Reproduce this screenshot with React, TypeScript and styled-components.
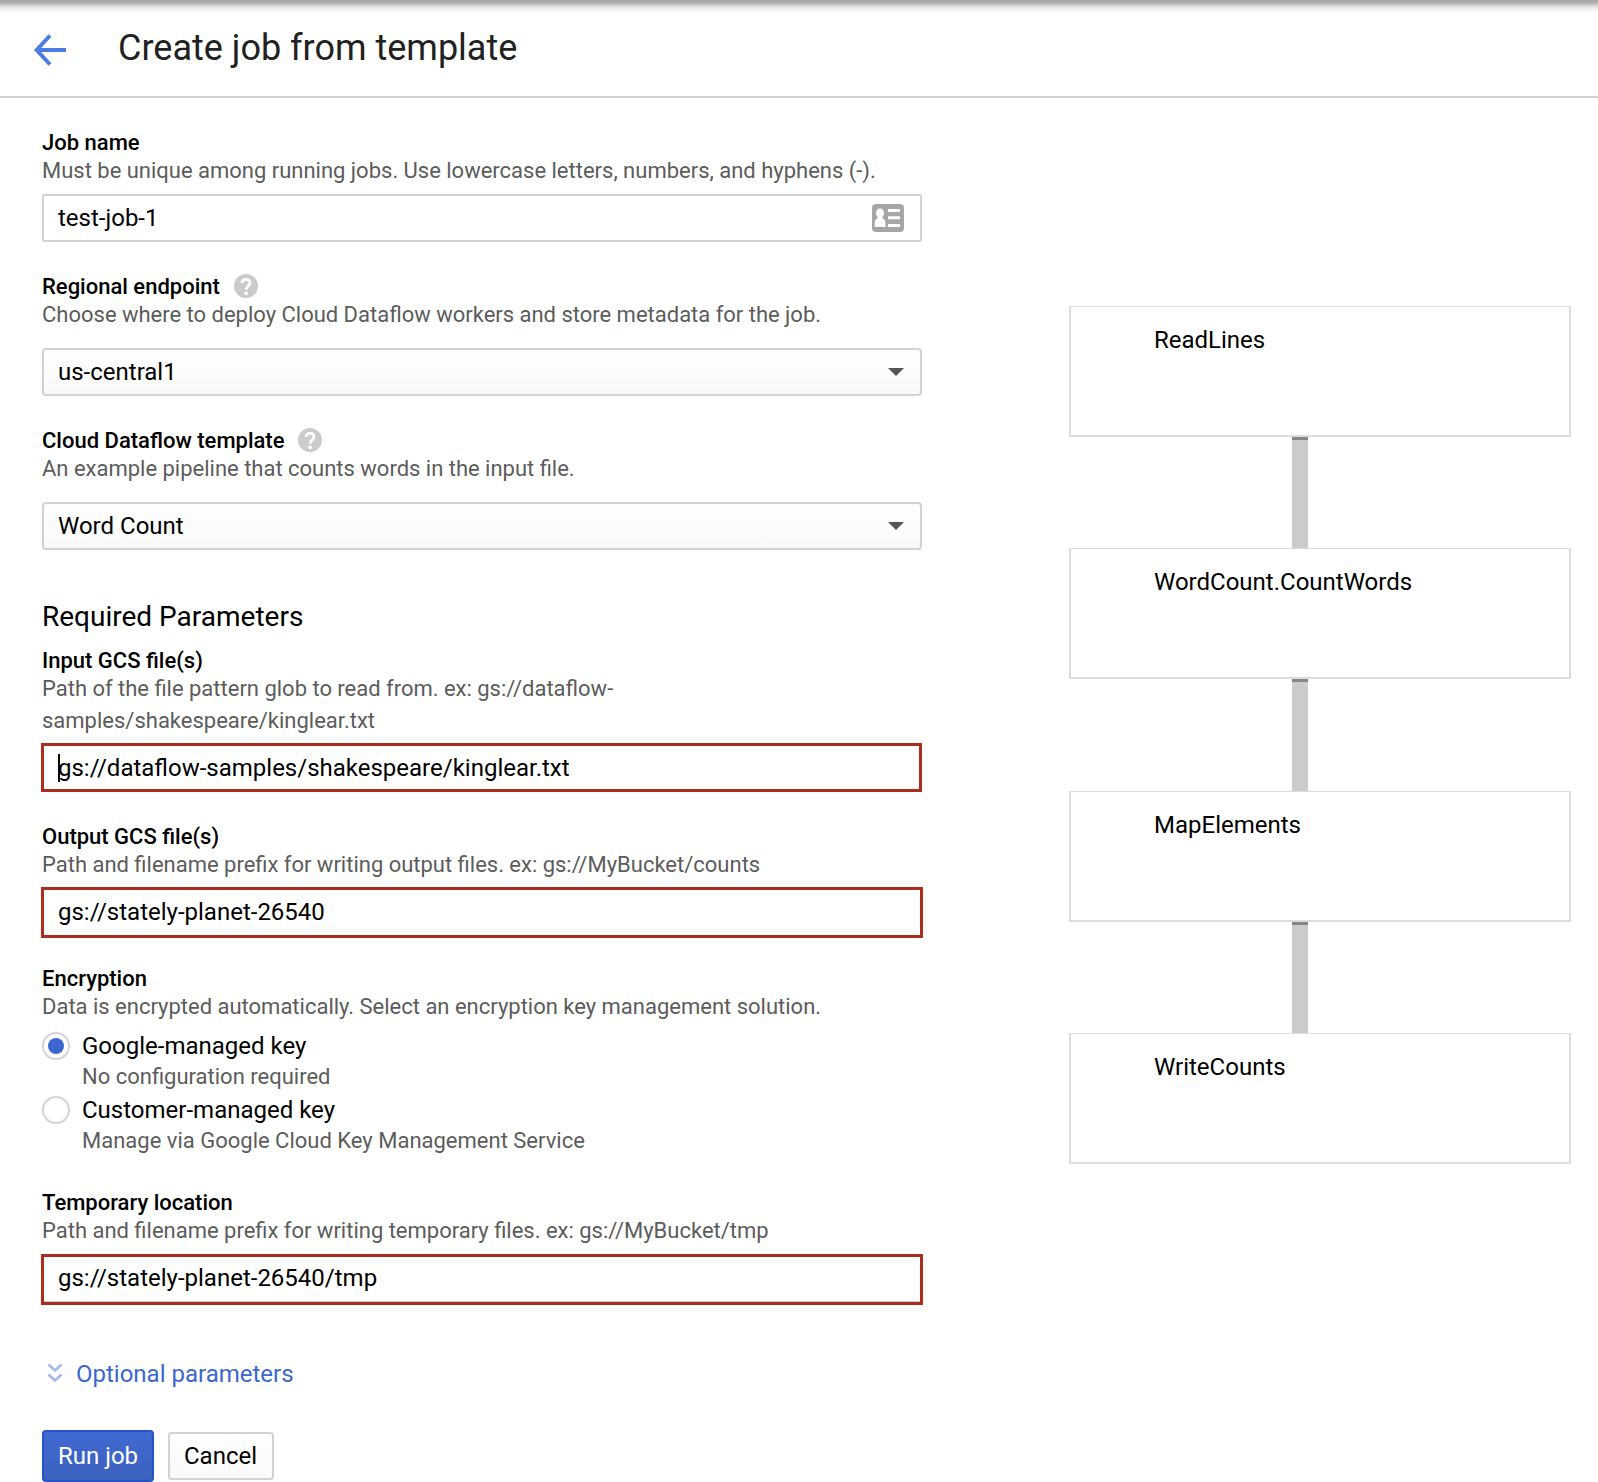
import React from "react";
import styled, { createGlobalStyle, css } from "styled-components";

const GlobalStyle = createGlobalStyle`
  *, *::before, *::after { box-sizing: border-box; }
  body {
    margin: 0;
    background: #fff;
    color: #000;
    font-family: Roboto, "Liberation Sans", sans-serif;
    overflow: hidden;
  }
`;

const Page = styled.div`
  width: 1598px;
  height: 1482px;
  overflow: hidden;
  background: #fff;
`;

const TopShadow = styled.div`
  height: 14px;
  margin-bottom: -14px;
  background: linear-gradient(#a4a4a4 0, #b2b2b2 3px, #d8d8d8 6px, #f2f2f2 9px, #fff 14px);
`;

const Header = styled.header`
  display: flex;
  align-items: center;
  height: 98px;
  padding: 0 0 2px 34px;
  border-bottom: 2px solid #d2d2d2;
`;

const BackIcon = styled.svg`
  display: block;
  width: 32px;
  height: 32px;
  margin-top: 6px;
`;

const Title = styled.h1`
  margin: 2px 0 0 52px;
  font-size: 36px;
  font-weight: 400;
  line-height: 48px;
  color: #212121;
`;

const Body = styled.main`
  display: flex;
  align-items: flex-start;
`;

const Form = styled.form`
  width: 922px;
  padding: 29px 0 0 42px;
`;

const Field = styled.section<{ $gap: number }>`
  margin-bottom: ${(p) => p.$gap}px;
`;

const Label = styled.div`
  display: flex;
  align-items: center;
  height: 32px;
  font-size: 22px;
  font-weight: 500;
  line-height: 32px;
`;

const HelpIcon = styled.svg`
  width: 24px;
  height: 24px;
  margin: -2px 0 0 14px;
`;

const Hint = styled.div`
  width: 860px;
  margin-top: -4px;
  font-size: 22px;
  line-height: 32px;
  word-spacing: -0.06px;
  color: #5c5c5c;
`;

const control = css`
  display: flex;
  align-items: center;
  justify-content: space-between;
  height: 48px;
  padding: 0 16px 0 14px;
  border: 2px solid #d2d2d2;
  font-size: 24px;
  line-height: 28px;
`;

const TextBox = styled.div`
  ${control}
  margin-top: 7px;
  border-radius: 2px;
`;

const RequiredBox = styled(TextBox)<{ $top?: number; $right?: number; $bottom?: number }>`
  height: auto;
  margin: ${(p) => 7 - (p.$top ?? 1)}px ${(p) => -(p.$right ?? 1)}px ${(p) => -(p.$bottom ?? 2)}px -1px;
  padding: ${(p) => 7 + (p.$top ?? 1)}px 14px ${(p) => 7 + (p.$bottom ?? 2)}px 14px;
  border: 3px solid #ab2d1b;
  border-radius: 0;
  box-shadow: ${(p) => (p.$top === 0 ? "inset 0 -1px #cdcdcd" : "none")};
`;

const SelectBox = styled.div`
  ${control}
  margin-top: 17px;
  border-radius: 4px;
  background: linear-gradient(#fff, #f9f9f9);
`;

const Caret = styled.span`
  border: 8px solid transparent;
  border-top-color: #555;
  border-bottom: 0;
`;

const CardIcon = styled.svg`
  width: 32px;
  height: 28px;
`;

const Cursor = styled.span`
  display: inline-block;
  width: 2px;
  height: 28px;
  margin-right: -2px;
  vertical-align: top;
  background: #000;
`;

const SectionTitle = styled.h2`
  margin: 0;
  padding-bottom: 8px;
  font-size: 28px;
  font-weight: 400;
  line-height: 40px;
`;

const Options = styled.div`
  padding-top: 7px;
`;

const Option = styled.label`
  display: grid;
  grid-template-columns: 40px 1fr;
  grid-template-rows: 32px 32px;
  align-items: center;
`;

const Radio = styled.span<{ $on?: boolean }>`
  display: grid;
  place-items: center;
  width: 28px;
  height: 28px;
  border: 2px solid #d4d4d4;
  border-radius: 50%;

  &::after {
    content: "";
    width: 16px;
    height: 16px;
    border-radius: 50%;
    background: ${(p) => (p.$on ? "#3b67cf" : "transparent")};
  }
`;

const OptionName = styled.span`
  font-size: 24px;
  line-height: 32px;
`;

const OptionHint = styled.span`
  grid-column: 2;
  margin-bottom: 2px;
  font-size: 22px;
  line-height: 28px;
  color: #5c5c5c;
`;

const Expander = styled.a`
  display: flex;
  align-items: center;
  height: 32px;
  font-size: 24px;
  color: #3b67cf;
`;

const ExpandIcon = styled.svg`
  width: 16px;
  height: 20px;
  margin: 0 13px 2px 5px;
`;

const Actions = styled.div`
  display: flex;
  align-items: center;
  gap: 14px;
  margin-top: 40px;
`;

const Button = styled.button<{ $primary?: boolean }>`
  width: ${(p) => (p.$primary ? 112 : 106)}px;
  height: ${(p) => (p.$primary ? 52 : 48)}px;
  padding: 0 ${(p) => (p.$primary ? 0 : 1)}px 0 0;
  border: 2px solid ${(p) => (p.$primary ? "#2356c4" : "#d2d2d2")};
  border-radius: 4px;
  background: ${(p) => (p.$primary ? "linear-gradient(#4069d2, #3c62bf)" : "linear-gradient(#fff, #f9f9f9)")};
  color: ${(p) => (p.$primary ? "#fff" : "#000")};
  font: 400 24px/28px Roboto, "Liberation Sans", sans-serif;
`;

const Graph = styled.aside`
  display: flex;
  flex-direction: column;
  width: 502px;
  margin: 208px 0 0 147px;
`;

const Node = styled.div`
  height: 131px;
  padding: 17px 0 0 83px;
  border: 2px solid #dcdce1;
  border-top-width: 1px;
  font-size: 24px;
  line-height: 32px;
`;

const Link = styled.div`
  width: 16px;
  height: 111.3px;
  margin-left: 223px;
  border-top: 3px solid #82878c;
  background: #cbcbcb;
`;

const Help = () => (
  <HelpIcon viewBox="0 0 24 24">
    <circle cx="12" cy="12" r="12" fill="#cbcbcb" />
    <path d="M8.1 9C8.1 6.7 9.7 5.4 12 5.4s4 1.4 4 3.5c0 3-3.8 3-3.8 6.8" fill="none" stroke="#fff" strokeWidth="2.8" />
    <circle cx="12.1" cy="19.3" r="1.9" fill="#fff" />
  </HelpIcon>
);

const steps = ["ReadLines", "WordCount.CountWords", "MapElements", "WriteCounts"];

export default function App() {
  return (
    <>
      <GlobalStyle />
      <Page>
        <TopShadow />
        <Header>
          <BackIcon viewBox="0 0 32 32" fill="none" stroke="#4a7de2" strokeWidth="4">
            <path d="M32 16H3M16 1.5L2.7 16 16 30.5" />
          </BackIcon>
          <Title>Create job from template</Title>
        </Header>
        <Body>
          <Form>
            <Field $gap={29}>
              <Label>Job name</Label>
              <Hint>Must be unique among running jobs. Use lowercase letters, numbers, and hyphens (-).</Hint>
              <TextBox>
                test-job-1
                <CardIcon viewBox="0 0 32 28">
                  <rect width="32" height="28" rx="4" fill="#a6a6a6" />
                  <g fill="#fff">
                    <ellipse cx="8" cy="9.2" rx="4" ry="4.7" />
                    <path d="M5.7 12h4.6v2.3c2.2.7 3.2 2.3 3.2 4.7v4H2.7v-4c0-2.4 1-4 3-4.7z" />
                    <path d="M16 5h12v3H16zM16 12.3h12v3H16zM16 20h12v3H16z" />
                  </g>
                </CardIcon>
              </TextBox>
            </Field>
            <Field $gap={29}>
              <Label>
                Regional endpoint
                <Help />
              </Label>
              <Hint>Choose where to deploy Cloud Dataflow workers and store metadata for the job.</Hint>
              <SelectBox>
                us-central1
                <Caret />
              </SelectBox>
            </Field>
            <Field $gap={47}>
              <Label>
                Cloud Dataflow template
                <Help />
              </Label>
              <Hint>An example pipeline that counts words in the input file.</Hint>
              <SelectBox>
                Word Count
                <Caret />
              </SelectBox>
            </Field>
            <SectionTitle>Required Parameters</SectionTitle>
            <Field $gap={29}>
              <Label>Input GCS file(s)</Label>
              <Hint>
                Path of the file pattern glob to read from. ex: gs://dataflow-
                <br />
                samples/shakespeare/kinglear.txt
              </Hint>
              <RequiredBox $right={0} $bottom={0}>
                <span>
                  <Cursor />
                  gs://dataflow-samples/shakespeare/kinglear.txt
                </span>
              </RequiredBox>
            </Field>
            <Field $gap={27}>
              <Label>Output GCS file(s)</Label>
              <Hint>Path and filename prefix for writing output files. ex: gs://MyBucket/counts</Hint>
              <RequiredBox>gs://stately-planet-26540</RequiredBox>
            </Field>
            <Field $gap={29}>
              <Label>Encryption</Label>
              <Hint>Data is encrypted automatically. Select an encryption key management solution.</Hint>
              <Options>
                <Option>
                  <Radio $on />
                  <OptionName>Google-managed key</OptionName>
                  <OptionHint>No configuration required</OptionHint>
                </Option>
                <Option>
                  <Radio />
                  <OptionName>Customer-managed key</OptionName>
                  <OptionHint>Manage via Google Cloud Key Management Service</OptionHint>
                </Option>
              </Options>
            </Field>
            <Field $gap={56}>
              <Label>Temporary location</Label>
              <Hint>Path and filename prefix for writing temporary files. ex: gs://MyBucket/tmp</Hint>
              <RequiredBox $top={0} $bottom={3}>gs://stately-planet-26540/tmp</RequiredBox>
            </Field>
            <Expander>
              <ExpandIcon viewBox="0 0 16 20" fill="none" stroke="#a3b8eb" strokeWidth="2.6">
                <path d="M1.5 1.5L8 7.5l6.5-6M1.5 11.5L8 17.5l6.5-6" />
              </ExpandIcon>
              Optional parameters
            </Expander>
            <Actions>
              <Button type="button" $primary>Run job</Button>
              <Button type="button">Cancel</Button>
            </Actions>
          </Form>
          <Graph>
            {steps.map((name, i) => (
              <React.Fragment key={name}>
                {i > 0 && <Link />}
                <Node>{name}</Node>
              </React.Fragment>
            ))}
          </Graph>
        </Body>
      </Page>
    </>
  );
}
